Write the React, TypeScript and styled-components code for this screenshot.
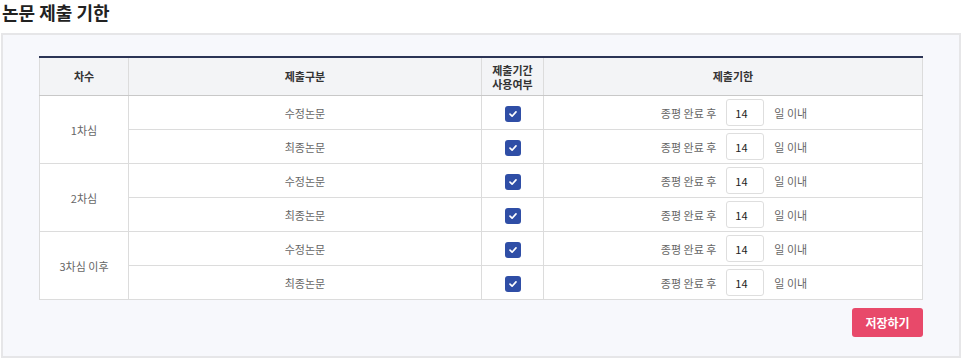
import React from 'react'
import styled, { createGlobalStyle } from 'styled-components'

const GlobalStyle = createGlobalStyle`
  body {
    margin: 0;
    background: #fff;
    font-family: 'Noto Sans CJK KR', 'Noto Sans', sans-serif;
  }
`

type Row = { label: string; kind: string }
const groups: { name: string; rows: Row[] }[] = [
  { name: '1차심', rows: [{ label: '1', kind: '수정논문' }, { label: '2', kind: '최종논문' }] },
  { name: '2차심', rows: [{ label: '1', kind: '수정논문' }, { label: '2', kind: '최종논문' }] },
  { name: '3차심 이후', rows: [{ label: '1', kind: '수정논문' }, { label: '2', kind: '최종논문' }] },
]

const CheckIcon = () => (
  <svg width="10" height="10" viewBox="0 0 10 10">
    <path d="M2 5.2 L4.1 7.2 L8 2.9" fill="none" stroke="#fff" strokeWidth="1.7" strokeLinecap="round" strokeLinejoin="round" />
  </svg>
)

const App: React.FC = () => {
  return (
    <Page>
      <GlobalStyle />
      <Title>논문 제출 기한</Title>
      <Panel>
        <Table>
          <colgroup>
            <col style={{ width: 89 }} />
            <col style={{ width: 353 }} />
            <col style={{ width: 62 }} />
            <col />
          </colgroup>
          <thead>
            <tr>
              <Th>차수</Th>
              <Th>제출구분</Th>
              <Th>
                <HeadLine>제출기간</HeadLine>
                <HeadLine>사용여부</HeadLine>
              </Th>
              <Th>제출기한</Th>
            </tr>
          </thead>
          <tbody>
            {groups.map((g) =>
              g.rows.map((r, i) => (
                <tr key={g.name + r.label}>
                  {i === 0 && <Td rowSpan={g.rows.length}>{g.name}</Td>}
                  <Td>{r.kind}</Td>
                  <Td>
                    <Check>
                      <CheckIcon />
                    </Check>
                  </Td>
                  <Td>
                    <Deadline>
                      <span>종평 완료 후</span>
                      <DayInput defaultValue="14" />
                      <span>일 이내</span>
                    </Deadline>
                  </Td>
                </tr>
              ))
            )}
          </tbody>
        </Table>
        <Actions>
          <SaveButton>저장하기</SaveButton>
        </Actions>
      </Panel>
    </Page>
  )
}
export default App

const Page = styled.div`
  padding: 0 2px 0 1px;
`

const Title = styled.h2`
  margin: 0;
  height: 33px;
  padding: 0 0 0 1px;
  box-sizing: border-box;
  font-size: 18px;
  font-weight: 700;
  color: #222;
  line-height: 24px;
`

const Panel = styled.div`
  border: 2px solid #e6e6e8;
  background: #f7f8fc;
  padding: 21px 36px 20px 36px;
  height: 325px;
  box-sizing: border-box;
`

const Table = styled.table`
  width: 100%;
  border-collapse: collapse;
  table-layout: fixed;
  background: #fff;
  border-top: 2px solid #2c3556;
`

const Th = styled.th`
  height: 37px;
  padding: 0;
  background: #f3f4f6;
  border: 1px solid #dcdcdc;
  border-top: none;
  border-bottom: 1px solid #c8c8c8;
  font-size: 11px;
  font-weight: 700;
  color: #333;
  line-height: 15px;
  text-align: center;
`

const HeadLine = styled.div`
  line-height: 14px;
  height: 14px;
  overflow: hidden;
`

const Td = styled.td`
  height: 33px;
  padding: 0;
  border: 1px solid #dcdcdc;
  font-size: 11px;
  color: #666;
  text-align: center;
  vertical-align: middle;
`

const Check = styled.span`
  display: inline-flex;
  align-items: center;
  justify-content: center;
  width: 16px;
  height: 16px;
  border-radius: 3px;
  background: #2f4ea6;
  vertical-align: middle;
`

const Deadline = styled.div`
  display: flex;
  align-items: center;
  justify-content: center;
  gap: 10px;
  padding-left: 2px;
`

const DayInput = styled.input`
  width: 38px;
  height: 27px;
  box-sizing: border-box;
  border: 1px solid #dedede;
  border-radius: 3px;
  padding: 0 0 0 8px;
  font-family: 'Noto Sans CJK KR', 'Noto Sans', sans-serif;
  font-size: 11px;
  color: #222;
  outline: none;
`

const Actions = styled.div`
  display: flex;
  justify-content: flex-end;
  margin-top: 8px;
`

const SaveButton = styled.button`
  width: 71px;
  height: 29px;
  border: none;
  border-radius: 3px;
  background: #e8496a;
  color: #fff;
  font-family: 'Noto Sans CJK KR', 'Noto Sans', sans-serif;
  font-size: 12px;
  font-weight: 700;
  cursor: pointer;
`
